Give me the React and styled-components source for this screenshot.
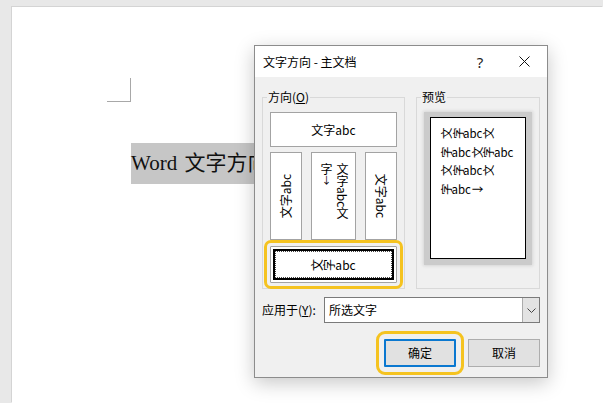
import React from 'react';
import styled, { createGlobalStyle } from 'styled-components';

const GlobalStyle = createGlobalStyle`
  html, body {
    margin: 0;
    padding: 0;
  }
  body {
    background: #e8e8e8;
    width: 603px;
    height: 403px;
    overflow: hidden;
    font-family: "Noto Sans CJK SC", sans-serif;
  }
`;

const Screen = styled.div`
  position: relative;
  width: 603px;
  height: 403px;
  overflow: hidden;
  box-sizing: border-box;
  padding: 7px 0 0 12px;
`;

const Page = styled.div`
  height: 100%;
  box-sizing: border-box;
  background: #ffffff;
  box-shadow: -1px -1px 0 #d4d4d4;
  padding: 71px 0 0 95px;
`;

const CornerMark = styled.div`
  width: 23px;
  height: 23px;
  border-right: 1px solid #a8a8a8;
  border-bottom: 1px solid #a8a8a8;
`;

const DocLine = styled.div`
  display: inline-block;
  margin: 41px 0 0 24px;
  height: 41px;
  line-height: 41px;
  padding-right: 120px;
  background: #c6c6c6;
  font-family: "Liberation Serif", "Noto Sans CJK SC", serif;
  font-size: 21px;
  word-spacing: 2px;
  color: #111;
  white-space: nowrap;
`;

/* dialog window lies over the document */
const Dialog = styled.div`
  position: absolute;
  left: 254px;
  top: 45px;
  width: 294px;
  height: 333px;
  box-sizing: border-box;
  border: 1px solid #8c8c8c;
  background: #f0f0f0;
  box-shadow: 0 5px 18px rgba(0, 0, 0, 0.22);
  display: flex;
  flex-direction: column;
  font-size: 12px;
  line-height: 16px;
  color: #000;
`;

const TitleBar = styled.div`
  height: 31px;
  flex: none;
  display: flex;
  align-items: center;
  background: #ffffff;
  padding-left: 8px;
`;

const TitleText = styled.div`
  flex: 1;
  font-size: 12px;
`;

const TitleButton = styled.div`
  width: 46px;
  height: 31px;
  display: flex;
  align-items: center;
  justify-content: center;
  font-family: "Noto Sans", sans-serif;
  font-size: 15px;
  color: #222;
  padding-left: ${(p) => p.$shift || 0}px;
  box-sizing: border-box;
`;

const Body = styled.div`
  flex: 1;
  padding: 12px 7px 10px 7px;
  display: flex;
  flex-direction: column;
`;

const GroupRow = styled.div`
  display: flex;
  gap: 11px;
  height: 200px;
`;

const Group = styled.fieldset`
  margin: 0;
  padding: 0 7px 5px 7px;
  border: 1px solid #d9d9d9;
  width: ${(p) => p.$width}px;
  box-sizing: border-box;
  min-width: 0;
  display: flex;
  flex-direction: column;
`;

const Legend = styled.legend`
  margin-left: -3px;
  padding: 0 1px;
  line-height: 16px;
  font-size: 12px;
`;

const OptionBox = styled.div`
  height: ${(p) => p.$h}px;
  box-sizing: border-box;
  border: 1px solid #a3a3a3;
  background: #ffffff;
  display: flex;
  align-items: center;
  justify-content: ${(p) => p.$justify || 'center'};
  overflow: hidden;
`;

const TopOption = styled(OptionBox)`
  margin-top: 7px;
`;

const VerticalRow = styled.div`
  margin-top: 5px;
  display: grid;
  grid-template-columns: 32px 45px 32px;
  justify-content: space-between;
`;

const SideText = styled.span`
  display: inline-block;
  white-space: nowrap;
  transform: rotate(${(p) => (p.$up ? -90 : 90)}deg);
`;

const VerticalText = styled.div`
  writing-mode: vertical-rl;
  text-orientation: mixed;
  line-height: 16px;
  align-self: flex-start;
  padding: 10px 5px 0 0;
`;

const UprightGlyph = styled.span`
  text-orientation: upright;
  font-size: 10px;
`;

const SelectedOption = styled.div`
  margin-top: 6px;
  height: 37px;
  box-sizing: border-box;
  border: 1px solid #a3a3a3;
  border-radius: 1px;
  background: #ffffff;
  padding: 2px;
  outline: 3px solid #f5c320;
  outline-offset: 3px;
`;

const SelectedFrame = styled.div`
  height: 100%;
  box-sizing: border-box;
  border: 2px solid #000;
`;

const FocusRect = styled.div`
  height: 100%;
  box-sizing: border-box;
  border: 1px dotted #444;
  display: flex;
  align-items: center;
  justify-content: center;
`;

const Rot = styled.span`
  display: inline-block;
  transform: rotate(-90deg);
`;

const PreviewFrame = styled.div`
  margin-top: 7px;
  height: 153px;
  box-sizing: border-box;
  background: #cbcbcb;
  box-shadow: 0 0 3px 1px #d6d6d6;
  padding: 5px 6px 6px 6px;
`;

const PreviewPage = styled.div`
  height: 100%;
  box-sizing: border-box;
  background: #ffffff;
  border: 1px solid #000;
  padding: 6px 0 0 9px;
  font-size: 11.5px;
`;

const PreviewLine = styled.div`
  height: 18.5px;
  line-height: 18.5px;
  white-space: nowrap;
`;

const ApplyRow = styled.div`
  margin-top: 8px;
  display: flex;
  align-items: center;
`;

const ApplyLabel = styled.div`
  width: 62px;
  flex: none;
`;

const Select = styled.div`
  flex: 1;
  height: 26px;
  box-sizing: border-box;
  border: 1px solid #7a7a7a;
  background: #ffffff;
  display: flex;
  align-items: center;
`;

const SelectValue = styled.div`
  flex: 1;
  padding-left: 4px;
`;

const SelectArrow = styled.div`
  width: 17px;
  height: 100%;
  box-sizing: border-box;
  background: #e3e3e3;
  border-left: 1px solid #acacac;
  display: flex;
  align-items: center;
  justify-content: center;
`;

const ButtonRow = styled.div`
  margin-top: 16px;
  display: flex;
  justify-content: flex-end;
  gap: 12px;
`;

const Button = styled.div`
  width: 72px;
  height: 28px;
  box-sizing: border-box;
  background: #e1e1e1;
  border: ${(p) => (p.$primary ? '2px solid #0b78d0' : '1px solid #adadad')};
  display: flex;
  align-items: center;
  justify-content: center;
  ${(p) =>
    p.$marked &&
    `
    border-radius: 1px;
    outline: 3px solid #f5c320;
    outline-offset: 5px;
  `}
`;

const RotWord = ({ text }) =>
  text.split('').map((ch, i) =>
    /[a-z]/.test(ch) ? ch : <Rot key={i}>{ch}</Rot>
  );

export default function App() {
  return (
    <Screen>
      <GlobalStyle />
      <Page>
        <CornerMark />
        <DocLine>Word 文字方向</DocLine>
      </Page>

      <Dialog>
        <TitleBar>
          <TitleText>文字方向 - 主文档</TitleText>
          <TitleButton $shift={4}>?</TitleButton>
          <TitleButton>
            <svg width="11" height="11" viewBox="0 0 11 11">
              <path d="M0.5 0.5 L10.5 10.5 M10.5 0.5 L0.5 10.5" stroke="#111" strokeWidth="1" fill="none" />
            </svg>
          </TitleButton>
        </TitleBar>
        <Body>
          <GroupRow>
            <Group $width={143}>
              <Legend>
                方向(<u>O</u>)
              </Legend>
              <TopOption $h={35}>文字abc</TopOption>
              <VerticalRow>
                <OptionBox $h={88}>
                  <SideText $up>文字abc</SideText>
                </OptionBox>
                <OptionBox $h={88} $justify="flex-end">
                  <VerticalText>
                    文字abc文
                    <br />
                    字<UprightGlyph>↓</UprightGlyph>
                  </VerticalText>
                </OptionBox>
                <OptionBox $h={88}>
                  <SideText>文字abc</SideText>
                </OptionBox>
              </VerticalRow>
              <SelectedOption>
                <SelectedFrame>
                  <FocusRect>
                    <RotWord text="文字abc" />
                  </FocusRect>
                </SelectedFrame>
              </SelectedOption>
            </Group>
            <Group $width={124}>
              <Legend>预览</Legend>
              <PreviewFrame>
                <PreviewPage>
                  <PreviewLine>
                    <RotWord text="文字abc文" />
                  </PreviewLine>
                  <PreviewLine>
                    <RotWord text="字abc文字abc" />
                  </PreviewLine>
                  <PreviewLine>
                    <RotWord text="文字abc文" />
                  </PreviewLine>
                  <PreviewLine>
                    <RotWord text="字abc" />
                    <Rot>↓</Rot>
                  </PreviewLine>
                </PreviewPage>
              </PreviewFrame>
            </Group>
          </GroupRow>
          <ApplyRow>
            <ApplyLabel>
              应用于(<u>Y</u>):
            </ApplyLabel>
            <Select>
              <SelectValue>所选文字</SelectValue>
              <SelectArrow>
                <svg width="9" height="5" viewBox="0 0 9 5">
                  <path d="M0.5 0.5 L4.5 4.5 L8.5 0.5" stroke="#444" strokeWidth="1" fill="none" />
                </svg>
              </SelectArrow>
            </Select>
          </ApplyRow>
          <ButtonRow>
            <Button $primary $marked>
              确定
            </Button>
            <Button>取消</Button>
          </ButtonRow>
        </Body>
      </Dialog>
    </Screen>
  );
}
